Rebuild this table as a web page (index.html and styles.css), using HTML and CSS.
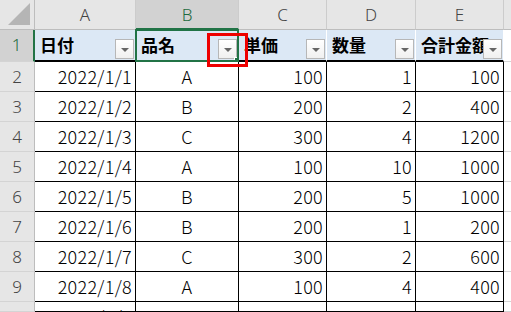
FILE: index.html
```html
<!DOCTYPE html>
<html lang="ja">
<head>
<meta charset="utf-8">
<link rel="stylesheet" href="styles.css">
</head>
<body>
<div class="sheet">
  <div class="corner"><span class="tri"></span></div>
  <div class="ch">A</div>
  <div class="ch sel">B</div>
  <div class="ch">C</div>
  <div class="ch">D</div>
  <div class="ch">E</div>
  <div class="ch blank"></div>

  <div class="rh sel">1</div>
  <div class="th"><span class="lbl">日付</span><span class="fb"></span></div>
  <div class="th"><span class="lbl">品名</span><span class="fb"></span></div>
  <div class="th"><span class="lbl">単価</span><span class="fb"></span></div>
  <div class="th"><span class="lbl">数量</span><span class="fb"></span></div>
  <div class="th"><span class="lbl">合計金額</span><span class="fb"></span></div>
  <div class="out"></div>

  <div class="rh">2</div><div class="td r">2022/1/1</div><div class="td c">A</div><div class="td r">100</div><div class="td r">1</div><div class="td r">100</div><div class="out"></div>
  <div class="rh">3</div><div class="td r">2022/1/2</div><div class="td c">B</div><div class="td r">200</div><div class="td r">2</div><div class="td r">400</div><div class="out"></div>
  <div class="rh">4</div><div class="td r">2022/1/3</div><div class="td c">C</div><div class="td r">300</div><div class="td r">4</div><div class="td r">1200</div><div class="out"></div>
  <div class="rh">5</div><div class="td r">2022/1/4</div><div class="td c">A</div><div class="td r">100</div><div class="td r">10</div><div class="td r">1000</div><div class="out"></div>
  <div class="rh">6</div><div class="td r">2022/1/5</div><div class="td c">B</div><div class="td r">200</div><div class="td r">5</div><div class="td r">1000</div><div class="out"></div>
  <div class="rh">7</div><div class="td r">2022/1/6</div><div class="td c">B</div><div class="td r">200</div><div class="td r">1</div><div class="td r">200</div><div class="out"></div>
  <div class="rh">8</div><div class="td r">2022/1/7</div><div class="td c">C</div><div class="td r">300</div><div class="td r">2</div><div class="td r">600</div><div class="out"></div>
  <div class="rh">9</div><div class="td r">2022/1/8</div><div class="td c">A</div><div class="td r">100</div><div class="td r">4</div><div class="td r">400</div><div class="out"></div>
  <div class="rh">10</div><div class="td r">2022/1/9</div><div class="td c">A</div><div class="td r">100</div><div class="td r">10</div><div class="td r">1000</div><div class="out"></div>

  <div class="selbox"><span class="handle"></span></div>
  <div class="redbox"></div>
</div>
</body>
</html>
```
FILE: styles.css
```css
html, body {
  margin: 0;
  padding: 0;
  background: #ffffff;
}
body {
  width: 511px;
  height: 312px;
  overflow: hidden;
  font-family: "Noto Sans CJK JP", "Noto Sans", sans-serif;
}
.sheet {
  position: relative;
  display: grid;
  grid-template-columns: 35px 101px 103px 88px 89px 88px 7px;
  grid-template-rows: 30px 32px repeat(8, 30px) 10px;
  width: 511px;
  height: 312px;
  overflow: hidden;
}
.sheet > div {
  box-sizing: border-box;
  overflow: hidden;
  white-space: nowrap;
}
.corner {
  position: relative;
  background: #e6e6e6;
  border-right: 1px solid #bdbdbd;
  border-bottom: 1px solid #bdbdbd;
}
.tri {
  position: absolute;
  right: 4px;
  bottom: 4px;
  width: 0;
  height: 0;
  border-left: 22px solid transparent;
  border-bottom: 22px solid #b5b5b5;
}
.ch {
  background: #e6e6e6;
  border-right: 1px solid #cccccc;
  border-bottom: 1px solid #bdbdbd;
  color: #444444;
  font-family: "Noto Sans", "Liberation Sans", sans-serif;
  font-size: 17px;
  font-weight: 300;
  line-height: 29px;
  text-align: center;
}
.ch.sel {
  background: #d2d2d2;
  color: #1e6b3f;
  border-bottom: 2px solid #217346;
}
.ch.blank {
  border-right: none;
}
.rh {
  background: #e6e6e6;
  border-right: 1px solid #bdbdbd;
  border-bottom: 1px solid #d4d4d4;
  color: #444444;
  font-family: "Noto Sans", "Liberation Sans", sans-serif;
  font-size: 17px;
  font-weight: 300;
  line-height: 29px;
  text-align: center;
}
.rh.sel {
  background: #d2d2d2;
  color: #1e6b3f;
  border-right: 2px solid #217346;
  line-height: 30px;
}
.th {
  position: relative;
  background: #dce8f5;
  border-right: 1px solid #ffffff;
  border-bottom: 2px solid #000000;
  padding-left: 5px;
  font-size: 17px;
  font-weight: 700;
  line-height: 30px;
  color: #000000;
}
.lbl {
  display: block;
  overflow: hidden;
}
.fb {
  position: absolute;
  right: 1px;
  bottom: 1px;
  width: 19px;
  height: 20px;
  box-sizing: border-box;
  border: 1px solid #b7b7b7;
  background: linear-gradient(#ffffff, #f0f0f0);
}
.fb::after {
  content: "";
  position: absolute;
  left: 5px;
  top: 8px;
  width: 0;
  height: 0;
  border-left: 4px solid transparent;
  border-right: 4px solid transparent;
  border-top: 4px solid #666666;
}
.td {
  background: #ffffff;
  border-right: 1px solid #000000;
  border-bottom: 1px solid #000000;
  font-size: 18px;
  font-weight: 300;
  letter-spacing: 0.3px;
  line-height: 29px;
  color: #000000;
}
.td.r {
  text-align: right;
  padding-right: 3px;
}
.td.c {
  text-align: center;
}
.out {
  border-bottom: 1px solid #d4d4d4;
}
.selbox {
  position: absolute;
  left: 135px;
  top: 29px;
  width: 104px;
  height: 33px;
  box-sizing: border-box;
  border: 2px solid #217346;
}
.handle {
  position: absolute;
  right: -4px;
  bottom: -4px;
  width: 5px;
  height: 5px;
  background: #217346;
  border: 1px solid #ffffff;
}
.redbox {
  position: absolute;
  left: 207px;
  top: 33px;
  width: 41px;
  height: 34px;
  box-sizing: border-box;
  border: 3px solid #ee0000;
}
```
